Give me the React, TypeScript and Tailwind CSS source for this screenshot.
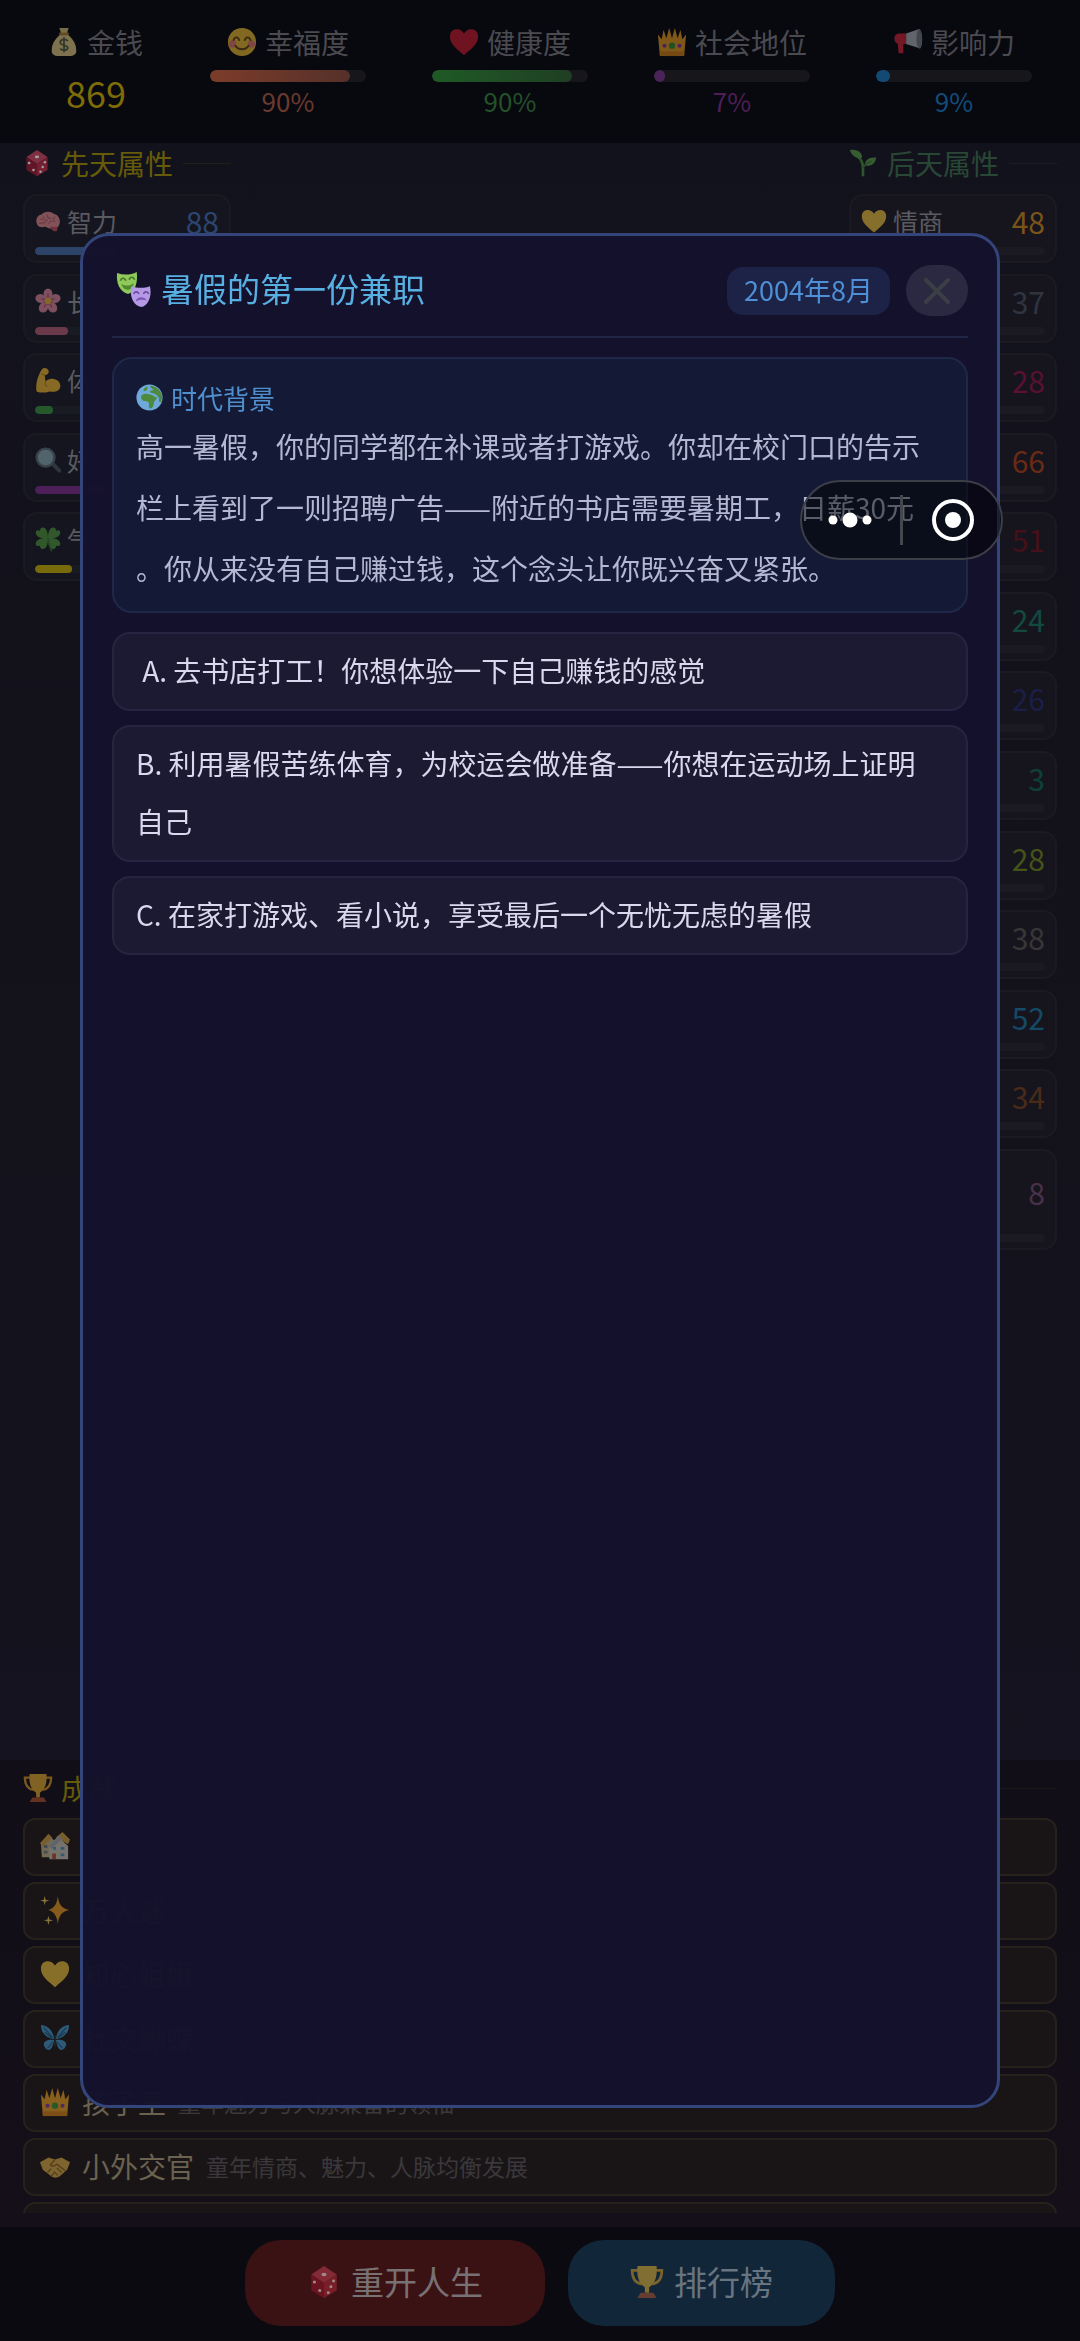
import type { ReactNode } from "react";

const shapes: Record<string, ReactNode> = {
  money: (
    <>
      <path d="M11 1h10l-2 6h-6z" fill="#e8d27a" />
      <path d="M12 8h8c5 4 9 10 9 16 1 5-3 7-7 7H10c-4 0-8-2-7-7 0-6 4-12 9-16z" fill="#f2dc8c" />
      <path d="M11 6h10v3H11z" fill="#b98d3c" />
      <path d="M20 15c-1-2-7-3-8 1s8 3 8 6-6 4-8 1M16 11v16" stroke="#5d6b4c" strokeWidth="2" fill="none" />
    </>
  ),
  smile: (
    <>
      <circle cx="16" cy="16" r="15" fill="#fcc934" />
      <circle cx="6" cy="18" r="4" fill="#f5857a" />
      <circle cx="26" cy="18" r="4" fill="#f5857a" />
      <path d="M7 14c1-4 5-4 6 0M19 14c1-4 5-4 6 0M9 20c3 5 11 5 14 0" stroke="#6b4a16" strokeWidth="2" fill="none" strokeLinecap="round" />
    </>
  ),
  heart: <path d="M16 30C8 23 1 18 1 10 1 1 12 0 16 7 20 0 31 1 31 10c0 8-7 13-15 20z" fill="#d81f33" />,
  gold: <path d="M16 30C8 23 1 18 1 10 1 1 12 0 16 7 20 0 31 1 31 10c0 8-7 13-15 20z" fill="#f5c63c" />,
  crown: (
    <>
      <path d="M3 30L1 8l4 5 2-10 3 9 3-11 3 11 3-11 3 11 3-9 2 10 4-5-2 22z" fill="#f6a821" />
      <path d="M3 26h26v5H3z" fill="#e08a17" />
      <circle cx="16" cy="20" r="3.400" fill="#3c9a3c" />
      <circle cx="8" cy="20" r="2.200" fill="#8a3ab0" />
      <circle cx="24" cy="20" r="2.200" fill="#8a3ab0" />
    </>
  ),
  horn: (
    <>
      <path d="M14 7L28 2c4 6 4 15 1 21l-15-5z" fill="#b9c0c6" />
      <ellipse cx="28" cy="12.500" rx="3" ry="10.500" fill="#7d868c" />
      <path d="M14 7v11H6c-6 0-6-11 0-11zM5 17h6v11H6z" fill="#df2940" />
    </>
  ),
  die: (
    <>
      <path d="M16 1l12 8-12 8L4 9z" fill="#c84558" />
      <path d="M4 9l12 8v14L4 24z" fill="#98172c" />
      <path d="M28 9l-12 8v14l12-7z" fill="#b8283e" />
      <ellipse cx="16" cy="9" rx="2.400" ry="1.700" fill="#fff" />
      <circle cx="7" cy="16" r="1.500" fill="#fff" />
      <circle cx="12" cy="24" r="1.500" fill="#fff" />
      <circle cx="20" cy="26" r="1.400" fill="#fff" />
      <circle cx="25" cy="15" r="1.400" fill="#fff" />
      <circle cx="22.500" cy="20.500" r="1.400" fill="#fff" />
    </>
  ),
  sprout: (
    <>
      <path d="M16 31c0-10 1-18-7-23" stroke="#4c9a3a" strokeWidth="3" fill="none" />
      <path d="M1 1c8-1 14 2 14 9C7 11 3 7 1 1z" fill="#5aa842" />
      <path d="M31 10c-1 7-6 10-13 9 0-6 5-10 13-9z" fill="#5aa842" />
      <path d="M16 22c2-5 6-7 10-8" stroke="#3d8330" strokeWidth="2" fill="none" />
    </>
  ),
  brain: (
    <>
      <path d="M3 21C0 16 2 9 8 8c4-5 12-4 15-1 6 1 9 8 7 13-1 4-4 5-7 5-5 1-8-1-10-2-4 1-8 1-10-2z" fill="#ef8f94" />
      <path d="M18 23c3 5 7 7 9 5l1-5z" fill="#cf4f5f" />
      <path d="M6 14c3 0 5-1 5-4M5 19c4 0 6-2 9-1M15 8c0 4 2 5 5 5M25 11c-3 1-3 5 0 6M17 20c0-3 2-4 5-4M11 15h5" stroke="#c4606a" strokeWidth="1.500" fill="none" />
    </>
  ),
  blossom: (
    <>
      <g fill="#e88a9e">
        <ellipse cx="16" cy="7" rx="5.500" ry="6.500" />
        <ellipse cx="25" cy="13" rx="6.500" ry="5.500" transform="rotate(-18 25 13)" />
        <ellipse cx="21.500" cy="24" rx="5.500" ry="6.500" transform="rotate(-36 21.500 24)" />
        <ellipse cx="10.500" cy="24" rx="5.500" ry="6.500" transform="rotate(36 10.500 24)" />
        <ellipse cx="7" cy="13" rx="6.500" ry="5.500" transform="rotate(18 7 13)" />
      </g>
      <path d="M16 16V7M16 16l8-3M16 16l5 8M16 16l-5 8M16 16l-8-3" stroke="#b84a64" strokeWidth="1.500" />
      <circle cx="16" cy="16" r="4" fill="#f2b632" />
    </>
  ),
  muscle: (
    <>
      <path d="M2 30C0 21 4 9 9 2c3-2 8 0 8 4-1 3-3 4-5 4l1 8c3-4 8-4 11-3 6 1 8 7 7 10-2 6-8 6-13 5-6 2-11 2-16 0z" fill="#f6bd2c" />
      <path d="M13 18c-1 3 0 5 2 6M12 10c-2 0-3-1-4-2" stroke="#c98a1a" strokeWidth="1.500" fill="none" />
    </>
  ),
  lens: (
    <>
      <path d="M21 20l9 9" stroke="#4b565c" strokeWidth="5" strokeLinecap="round" />
      <circle cx="13" cy="13" r="11" fill="#8fb3b8" stroke="#5f7076" strokeWidth="3" />
    </>
  ),
  clover: (
    <>
      <g fill="#4f9a38">
        <path d="M16 15C8 16 0 13 1 7c1-2 4-2 5-1 0-3 2-5 5-4 4 1 5 8 5 13z" />
        <path d="M16 15c8 1 16-2 15-8-1-2-4-2-5-1 0-3-2-5-5-4-4 1-5 8-5 13z" />
        <path d="M16 15C8 14 0 17 1 23c1 2 4 2 5 1 0 3 2 5 5 4 4-1 5-8 5-13z" />
        <path d="M16 15c8-1 16 2 15 8-1 2-4 2-5 1 0 3-2 5-5 4-4-1-5-8-5-13z" />
      </g>
      <path d="M16 15c1 8 2 12 5 16" stroke="#3a7a2a" strokeWidth="2" fill="none" />
    </>
  ),
  masks: (
    <>
      <path d="M1 1c6 2 12 2 18-1 1 9-1 18-8 20C3 18 0 10 1 1z" fill="#8fc95a" />
      <path d="M4 8c1-3 4-3 5 0M12 7c1-3 4-3 5 0" stroke="#47762a" strokeWidth="1.500" fill="none" />
      <path d="M5 11c4 2 8 2 11-1 0 7-9 9-11 1z" fill="#4f8a30" />
      <path d="M14 13c6 2 12 2 17 0 2 8-1 18-8 19-7-1-11-10-9-19z" fill="#b699e6" />
      <path d="M16 20c2-3 4-2 5 0M25 20c1-2 3-3 5 0" stroke="#6a4a9c" strokeWidth="1.500" fill="none" />
      <path d="M18 27c1-5 8-5 10-1-3-1-7-1-10 1z" fill="#7a58b4" />
    </>
  ),
  globe: (
    <>
      <circle cx="16" cy="16" r="15.500" fill="#6fa9dc" />
      <path d="M6 15c1-4 6-4 9-3l4 1c2 1 3 3 6 3-1 3-4 4-4 7 0 3-2 6-4 6-3-1-1-5-2-7-1-2-3-1-5-2-2 0-4-2-4-5z" fill="#4c8a3e" />
      <path d="M17 2c8 0 13 7 14 13 0 3-1 6-2 7-3-1-1-4-2-6-2-2-4-5-7-5-2 0-4-1-3-3l4-1c-2-2-4-2-4-5zM9 6c2-2 3-3 5-3l-1 4-4 2z" fill="#4c8a3e" />
    </>
  ),
  trophy: (
    <>
      <path d="M8 5H2c0 8 3 12 9 13M24 5h6c0 8-3 12-9 13" stroke="#e0a020" strokeWidth="2.500" fill="none" />
      <path d="M7 1h18c1 11-2 17-7 20v5h-4v-5C9 18 6 12 7 1z" fill="#efb52c" />
      <path d="M10 26h12l3 5H7z" fill="#b8562a" />
    </>
  ),
  houses: (
    <>
      <path d="M1 13l8-9 8 8v16H2z" fill="#cdbf95" />
      <path d="M0 13l9-10 4 4-9 10zM17 7l7-6 8 8-2 5z" fill="#d6a544" />
      <path d="M4 15h4v3H4zM4 21h4v3H4z" fill="#75808a" />
      <path d="M10 15l9-9 11 10v14H10z" fill="#d3d0c6" />
      <path d="M9 16L20 5l4 3-11 11z" fill="#a9b5bc" />
      <path d="M14 17h3v3h-3zM22 17h4v3h-4zM22 24h4v3h-4z" fill="#4aa0cf" />
      <path d="M13 24h4v6h-4z" fill="#b5563a" />
    </>
  ),
  sparkles: (
    <>
      <path d="M19 1c1 9 4 13 12 15-8 2-11 6-12 15-1-9-4-13-10-15 6-2 9-6 10-15z" fill="#f5a020" />
      <path d="M5 1l1 4 4 1-4 1-1 4-1-4-4-1 4-1zM9 22l1 4 4 1-4 1-1 4-1-4-4-1 4-1z" fill="#f7cf6a" />
    </>
  ),
  butterfly: (
    <>
      <g fill="#3f9fd8">
        <path d="M15 17C6 16 1 10 1 2c7 0 13 6 14 15zM17 17c9-1 14-7 14-15-7 0-13 6-14 15z" />
        <path d="M15 18c-6-1-11 1-11 5 2 8 9 9 11-5zM17 18c6-1 11 1 11 5-2 8-9 9-11-5z" />
      </g>
      <path d="M4 5l9 10M28 5l-9 10M8 27l6-7M24 27l-6-7M5 10l8 6M27 10l-8 6" stroke="#1d5c88" strokeWidth="1.200" />
      <path d="M16 13v12" stroke="#26323a" strokeWidth="2" />
    </>
  ),
  shake: (
    <>
      <path d="M0 12l9-5 7 2 7-2 9 5-3 8-8 7c-3 2-6 2-9 0l-9-7z" fill="#e3b345" />
      <path d="M16 9l-5 6c2 2 5 1 7-1l9 7M12 27l3-4M8 23l4-4M19 26l-4-4M23 23l-5-5" stroke="#8f6a20" strokeWidth="1.500" fill="none" />
    </>
  ),
};

const Icon = ({ name, className }: { name: string; className: string }) => (
  <svg viewBox="0 0 32 32" className={`shrink-0 ${className}`} aria-hidden="true">
    {shapes[name]}
  </svg>
);

const gauges = [
  { icon: "smile", label: "幸福度", value: 90, text: "text-[#6b3a2e]", bar: "from-[#7c3c2a] to-[#553029]" },
  { icon: "heart", label: "健康度", value: 90, text: "text-[#23522a]", bar: "from-[#1f5a26] to-[#1f3f22]" },
  { icon: "crown", label: "社会地位", value: 7, text: "text-[#4d1f55]", bar: "from-[#4a2358] to-[#4a2358]" },
  { icon: "horn", label: "影响力", value: 9, text: "text-[#104d7a]", bar: "from-[#124a74] to-[#124a74]" },
];

const innate = [
  { icon: "brain", label: "智力", value: "88", fill: 44, color: "text-[#2c4570]", bar: "bg-[#2c4468]" },
  { icon: "blossom", label: "长", value: "", fill: 18, color: "", bar: "bg-[#6b3a4a]" },
  { icon: "muscle", label: "体", value: "", fill: 10, color: "", bar: "bg-[#25592b]" },
  { icon: "lens", label: "好", value: "", fill: 40, color: "", bar: "bg-[#4d1f58]" },
  { icon: "clover", label: "气", value: "", fill: 20, color: "", bar: "bg-[#776a08]" },
];

const acquired = [
  { value: 48, color: "text-[#7a5418]", icon: "gold", label: "情商" },
  { value: 37, color: "text-[#2f3440]" },
  { value: 28, color: "text-[#5a1030]" },
  { value: 66, color: "text-[#6b2a14]" },
  { value: 51, color: "text-[#451018]" },
  { value: 24, color: "text-[#124a40]" },
  { value: 26, color: "text-[#1b1e48]" },
  { value: 3, color: "text-[#0e4038]" },
  { value: 28, color: "text-[#455218]" },
  { value: 38, color: "text-[#383637]" },
  { value: 52, color: "text-[#154a66]" },
  { value: 34, color: "text-[#4a2a18]" },
  { value: 8, color: "text-[#4a3048]", tall: true },
];

const achievements = [
  { icon: "houses", name: "", desc: "" },
  { icon: "sparkles", name: "万人迷", desc: "" },
  { icon: "gold", name: "知心姐姐", desc: "" },
  { icon: "butterfly", name: "社交蝴蝶", desc: "" },
  { icon: "crown", name: "孩子王", desc: "童年魅力与人脉兼备的领袖" },
  { icon: "shake", name: "小外交官", desc: "童年情商、魅力、人脉均衡发展" },
];

const story = [
  "高一暑假，你的同学都在补课或者打游戏。你却在校门口的告示",
  "栏上看到了一则招聘广告——附近的书店需要暑期工，日薪30元",
  "。你从来没有自己赚过钱，这个念头让你既兴奋又紧张。",
];

const options = [
  " A. 去书店打工！你想体验一下自己赚钱的感觉",
  "B. 利用暑假苦练体育，为校运会做准备——你想在运动场上证明自己",
  "C. 在家打游戏、看小说，享受最后一个无忧无虑的暑假",
];

const StatusBar = () => (
  <header className="flex bg-[#08080f] px-[15px] pt-6 pb-[27px] text-[#4a4a50]">
    <div className="flex w-[162px] flex-col items-center">
      <div className="flex h-9 items-center gap-2 text-[28px]">
        <Icon name="money" className="size-[30px] opacity-50" />
        金钱
      </div>
      <div className="mt-2 text-[36px] leading-[48px] text-[#7d6c08]">869</div>
    </div>
    {gauges.map((g) => (
      <div key={g.label} className="flex flex-1 flex-col items-center">
        <div className="flex h-9 items-center gap-2 text-[28px]">
          <Icon name={g.icon} className="size-[30px] opacity-50" />
          {g.label}
        </div>
        <div className="mt-[10px] h-3 w-[156px] overflow-hidden rounded-full bg-[#16161b]">
          <div className={`h-full rounded-full bg-gradient-to-r ${g.bar}`} style={{ width: `${g.value}%` }} />
        </div>
        <div className={`mt-1 text-[26px] leading-[30px] ${g.text}`}>{g.value}%</div>
      </div>
    ))}
  </header>
);

const AttributePanels = () => (
  <main className="flex flex-1 justify-between bg-gradient-to-b from-[#12121d] via-[#13111a] to-[#14131f] px-[23px]">
    <section className="w-[208px]">
      <h2 className="mb-[11px] flex h-10 items-center gap-[10px] text-[28px] text-[#665b08]">
        <Icon name="die" className="size-7 opacity-60" />
        <span className="whitespace-nowrap">先天属性</span>
        <span className="h-px flex-1 bg-[#212018]" />
      </h2>
      <div className="flex h-[387px] flex-col justify-between">
        {innate.map((a) => (
          <div key={a.label} className="flex h-[69px] flex-col justify-between rounded-[14px] border-2 border-[#191a22] bg-[#14151e] px-[10px] pt-[7px] pb-[6px]">
            <div className="flex items-center gap-[6px] text-[25px] leading-9 text-[#5a5a60]">
              <Icon name={a.icon} className="size-[26px] opacity-50" />
              <span className="flex-1">{a.label}</span>
              <span className={`text-[30px] ${a.color}`}>{a.value}</span>
            </div>
            <div className="h-2 overflow-hidden rounded-full bg-[#191b22]">
              <div className={`h-full rounded-full ${a.bar}`} style={{ width: `${a.fill}%` }} />
            </div>
          </div>
        ))}
      </div>
    </section>

    <section className="w-[208px]">
      <h2 className="mb-[11px] flex h-10 items-center gap-[10px] text-[28px] text-[#294735]">
        <Icon name="sprout" className="size-7 opacity-50" />
        <span className="whitespace-nowrap">后天属性</span>
        <span className="h-px flex-1 bg-[#1b1d24]" />
      </h2>
      <div className="flex h-[1056px] flex-col justify-between">
        {acquired.map((a, i) => (
          <div
            key={i}
            className={`flex flex-col justify-between rounded-[14px] border-2 border-[#1b1a22] bg-[#16151e] px-[10px] pt-[7px] pb-[6px] ${a.tall ? "h-[101px]" : "h-[69px]"}`}
          >
            <div className="flex flex-1 items-center gap-[6px] text-[25px] leading-9 text-[#5a5a60]">
              {a.icon && <Icon name={a.icon} className="size-[26px] opacity-50" />}
              <span className="flex-1">{a.label}</span>
              <span className={`text-[30px] ${a.color}`}>{a.value}</span>
            </div>
            <div className="mt-2 h-2 rounded-full bg-[#1b1a22]" />
          </div>
        ))}
      </div>
    </section>
  </main>
);

const Achievements = () => (
  <section className="bg-gradient-to-b from-[#110e18] to-[#140f18] px-[23px] pt-2 pb-[14px]">
    <h2 className="mb-[10px] flex h-10 items-center gap-2 text-[28px] text-[#665b08]">
      <Icon name="trophy" className="size-[30px] opacity-50" />
      成就
      <span className="h-px flex-1 bg-[#1b1819]" />
    </h2>
    <ul className="flex h-[395px] flex-col gap-[6px] overflow-hidden">
      {achievements.map((a) => (
        <li key={a.icon} className="flex h-[58px] shrink-0 items-center rounded-xl border-2 border-[#26221b] bg-[#191517] px-[15px] pb-[2px]">
          <Icon name={a.icon} className="size-[30px] opacity-50" />
          <span className="ml-3 text-[28px] text-[#6b6250]">{a.name}</span>
          <span className="ml-3 text-[23px] text-[#3b383b]">{a.desc}</span>
        </li>
      ))}
      <li className="h-[58px] shrink-0 rounded-xl border-2 border-[#26221b] bg-[#191517]" />
    </ul>
  </section>
);

const Footer = () => (
  <footer className="flex justify-center gap-[23px] bg-[#0b0a11] pt-[13px] pb-[15px] text-[33px] text-[#777173]">
    <button type="button" className="flex h-[86px] items-center gap-[10px] rounded-[36px] bg-[#3b1214] px-[62px] pb-[2px]">
      <Icon name="die" className="size-[34px] opacity-50" />
      重开人生
    </button>
    <button type="button" className="flex h-[86px] items-center gap-[10px] rounded-[36px] bg-[#12263a] px-[62px] pb-[2px] text-[#68747f]">
      <Icon name="trophy" className="size-[34px] opacity-50" />
      排行榜
    </button>
  </footer>
);

const EventDialog = () => (
  <div className="fixed inset-0 px-20 py-[233px]">
    <div role="dialog" aria-labelledby="event-title" className="h-full rounded-[29px] border-3 border-[#33457a] bg-[#14112d]/98 px-[29px] pt-[29px]">
      <div className="flex h-[73px] items-start justify-between border-b-2 border-[#212546]">
        <h1 id="event-title" className="flex h-12 items-center gap-[10px] text-[33px] text-[#58b0e2]">
          <Icon name="masks" className="ml-1 size-[35px]" />
          暑假的第一份兼职
        </h1>
        <div className="flex items-center gap-4">
          <span className="flex h-12 items-center rounded-2xl bg-[#1d2247] px-[17px] text-[27px] text-[#4e8fd6]">2004年8月</span>
          <button type="button" aria-label="关闭" className="flex h-[51px] w-[62px] items-center justify-center rounded-full bg-[#2b2842]">
            <svg viewBox="0 0 28 28" className="size-7" aria-hidden="true">
              <path d="M3 3l22 22M25 3L3 25" stroke="#3c3e45" strokeWidth="4" strokeLinecap="round" />
            </svg>
          </button>
        </div>
      </div>

      <div className="mt-[19px] rounded-[20px] border-2 border-[#1f2848] bg-[#141a35] px-[22px] pt-5 pb-3">
        <h2 className="flex h-[37px] items-center gap-2 text-[26px] text-[#4f8fce]">
          <Icon name="globe" className="size-[27px]" />
          时代背景
        </h2>
        <p className="text-[28px] leading-[61px] text-[#b4b8d2]">
          {story.map((line) => (
            <span key={line} className="block">
              {line}
            </span>
          ))}
        </p>
      </div>

      <div className="mt-[19px] flex flex-col gap-[14px]">
        {options.map((text) => (
          <button
            key={text}
            type="button"
            className="rounded-[18px] border-2 border-[#262440] bg-[#1c1933] pt-[7px] pr-9 pb-[10px] pl-[22px] text-left text-[28px] leading-[58px] whitespace-pre-wrap text-[#dad7ee]"
          >
            {text}
          </button>
        ))}
      </div>
    </div>
  </div>
);

const Capsule = () => (
  <div className="fixed top-[480px] right-[77px] flex h-20 w-[203px] items-center justify-between rounded-full border-2 border-[#3c3e48] bg-black/50 px-[26px]">
    <button type="button" aria-label="更多">
      <svg viewBox="0 0 44 20" className="h-5 w-11" aria-hidden="true">
        <g fill="#fff">
          <circle cx="5" cy="10" r="4.500" />
          <circle cx="22" cy="10" r="7.500" />
          <circle cx="39" cy="10" r="4.500" />
        </g>
      </svg>
    </button>
    <span className="h-[50px] w-[3px] bg-[#44454d]" />
    <button type="button" aria-label="退出">
      <svg viewBox="0 0 44 44" className="size-11" aria-hidden="true">
        <circle cx="22" cy="22" r="19" fill="none" stroke="#fff" strokeWidth="4" />
        <circle cx="22" cy="22" r="8" fill="#fff" />
      </svg>
    </button>
  </div>
);

const App = () => {
  return (
    <div className="flex min-h-screen flex-col bg-[#12121d] font-['Noto_Sans_CJK_SC',sans-serif]">
      <StatusBar />
      <AttributePanels />
      <Achievements />
      <Footer />
      <EventDialog />
      <Capsule />
    </div>
  );
};

export default App;
